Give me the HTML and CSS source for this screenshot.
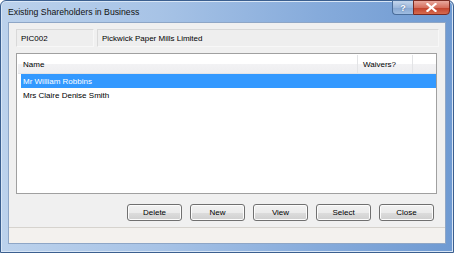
FILE: index.html
```html
<!doctype html>
<html lang="en">
<head>
    <meta charset="UTF-8">
    <meta name="viewport" content="width=device-width, initial-scale=1.0">
    <title>Existing Shareholders in Business</title>
    <link rel="stylesheet" href="styles.css">
</head>
<body>
    <div class="window">
        <div class="titlebar">
            <span class="title">Existing Shareholders in Business</span>
            <div class="caption-buttons">
                <span class="cap-btn help">?</span>
                <span class="cap-btn close">
                    <svg width="11" height="9" viewBox="0 0 11 9">
                        <path d="M1.5 1 L9.5 8 M9.5 1 L1.5 8" stroke="#ffffff" stroke-width="2.2" stroke-linecap="square"/>
                    </svg>
                </span>
            </div>
        </div>
        <div class="client">
            <div class="content">
                <div class="fields">
                    <div class="field code">PIC002</div>
                    <div class="field name">Pickwick Paper Mills Limited</div>
                </div>
                <div class="list">
                    <div class="list-header">
                        <div class="col col-name">Name</div>
                        <div class="col col-waivers">Waivers?</div>
                        <div class="col col-rest"></div>
                    </div>
                    <div class="row selected">
                        <div class="cell cell-name">Mr William Robbins</div>
                        <div class="cell cell-waivers"></div>
                    </div>
                    <div class="row">
                        <div class="cell cell-name">Mrs Claire Denise Smith</div>
                        <div class="cell cell-waivers"></div>
                    </div>
                </div>
                <div class="buttons">
                    <button>Delete</button>
                    <button>New</button>
                    <button>View</button>
                    <button>Select</button>
                    <button>Close</button>
                </div>
            </div>
            <div class="status"></div>
        </div>
    </div>
</body>
</html>
```

FILE: styles.css
```css
body {
    margin: 0;
    font-family: "Liberation Sans", Arial, sans-serif;
    font-size: 8px;
    color: #000000;
    background-color: #ffffff;
}

.window {
    width: 454px;
    height: 253px;
    box-sizing: border-box;
    display: flex;
    flex-direction: column;
    padding: 0 7px 8px 7px;
    border: 1px solid #3b5f8f;
    border-radius: 6px 6px 0 0;
    background: linear-gradient(to right, #bcd2ec 0%, #a7c3e6 35%, #86abdb 70%, #6f9ad2 100%);
    box-shadow: inset 0 0 0 1px #d8e6f6;
}

.titlebar {
    height: 21px;
    display: flex;
    justify-content: space-between;
    align-items: flex-start;
}

.title {
    font-size: 8.7px;
    margin-top: 6px;
    color: #111111;
}

.caption-buttons {
    display: flex;
    margin-right: -4px;
    margin-top: -1px;
}

.cap-btn {
    height: 15px;
    display: flex;
    align-items: center;
    justify-content: center;
    border: 1px solid #4a6d9a;
    box-sizing: border-box;
    color: #ffffff;
    font-weight: bold;
    font-size: 9px;
}

.help {
    width: 21px;
    border-right: none;
    border-radius: 0 0 0 4px;
    background: linear-gradient(#c3d5ec, #9db8dc 50%, #87a6d0 51%, #9fbde2);
    text-shadow: 0 0 2px #3a5f8f;
}

.close {
    width: 37px;
    border-color: #7a2a22;
    border-radius: 0 0 4px 0;
    background: linear-gradient(#e8a89e, #d6705f 50%, #c13f2b 51%, #d66b4f);
}

.client {
    flex: 1;
    display: flex;
    flex-direction: column;
    background-color: #f0f0f0;
    border: 1px solid #8ea6c6;
}

.content {
    flex: 1;
    display: flex;
    flex-direction: column;
    padding: 6px 6px 0 7px;
}

.fields {
    display: flex;
    gap: 3px;
    height: 18px;
}

.field {
    box-sizing: border-box;
    display: flex;
    align-items: center;
    padding-left: 4px;
    border: 1px solid #d9d9d9;
    border-right-color: #f7f7f7;
    border-bottom-color: #f7f7f7;
    background-color: #eeeeee;
}

.code {
    width: 78px;
}

.name {
    flex: 1;
}

.list {
    margin-top: 6px;
    margin-right: 2px;
    height: 141px;
    box-sizing: border-box;
    border: 1px solid #a0a0a0;
    background-color: #ffffff;
    padding: 1px 0 0 1px;
}

.list-header {
    display: flex;
    height: 18px;
    background: linear-gradient(#ffffff 0%, #ffffff 50%, #f2f2f4 51%, #eeeef0 100%);
    border-bottom: 1px solid #e3e4e6;
}

.col {
    box-sizing: border-box;
    display: flex;
    align-items: center;
    padding-left: 5px;
    border-right: 1px solid #e3e4e6;
}

.col-name {
    width: 340px;
}

.col-waivers {
    width: 55px;
}

.col-rest {
    flex: 1;
    border-right: none;
}

.row {
    display: flex;
    height: 14px;
    margin-left: 3px;
}

.cell {
    display: flex;
    align-items: center;
    padding-left: 2px;
    box-sizing: border-box;
}

.cell-name {
    width: 337px;
}

.cell-waivers {
    width: 55px;
}

.selected {
    background-color: #3399ff;
    color: #ffffff;
}

.buttons {
    display: flex;
    justify-content: flex-end;
    gap: 8px;
    margin-top: 10px;
    margin-right: 5px;
}

button {
    width: 55px;
    height: 17px;
    padding: 0;
    font-family: "Liberation Sans", Arial, sans-serif;
    font-size: 8px;
    color: #000000;
    border: 1px solid #707070;
    border-radius: 3px;
    background: linear-gradient(#f2f2f2 0%, #ebebeb 50%, #dddddd 51%, #cfcfcf 100%);
    box-shadow: inset 0 0 0 1px #fcfcfc;
}

.status {
    height: 15px;
    border-top: 1px solid #d6d3ce;
    background-color: #f3f1ee;
}
```
